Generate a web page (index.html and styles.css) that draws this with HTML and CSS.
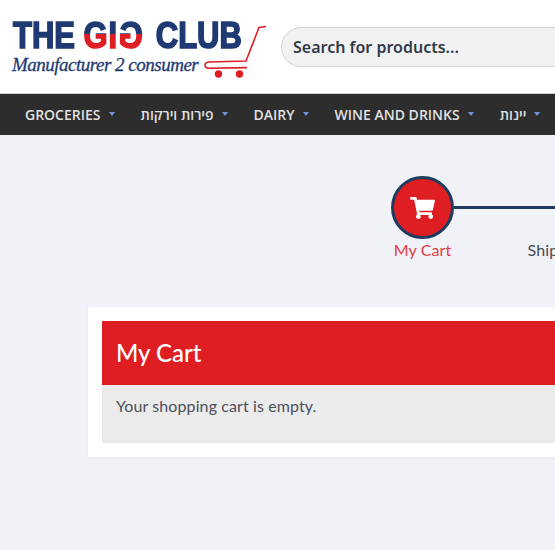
FILE: index.html
```html
<!DOCTYPE html>
<html lang="en">
<head>
    <meta charset="UTF-8">
    <meta name="viewport" content="width=device-width, initial-scale=1.0">
    <title>My Cart</title>
    <link rel="stylesheet" href="styles.css">
</head>
<body>

<header class="site-header">
    <a class="logo" href="#">
        <div class="logo-title">
            <span>THE</span>
            <span class="logo-gig">GI<span class="logo-flip">G</span></span>
            <span class="logo-club">CLUB</span>
        </div>
        <div class="logo-tagline">Manufacturer 2 consumer</div>
        <svg class="logo-cart" width="70" height="85" viewBox="0 0 70 85">
            <path d="M62 26.5 L55 27.5 L42 61 L5 62 Q1 62.5 1 65.2 Q1 68 5 68.2 L43 67.6" fill="none" stroke="#df1e24" stroke-width="1.6"/>
            <circle cx="14.5" cy="74" r="3.7" fill="#df1e24"/>
            <circle cx="35.5" cy="74" r="3.7" fill="#df1e24"/>
        </svg>
    </a>
    <input class="search-input" type="text" placeholder="Search for products...">
</header>

<nav class="main-nav">
    <a class="nav-item" href="#">Groceries<span class="nav-caret"></span></a>
    <a class="nav-item" href="#">פירות וירקות<span class="nav-caret"></span></a>
    <a class="nav-item" href="#">Dairy<span class="nav-caret"></span></a>
    <a class="nav-item" href="#">Wine and Drinks<span class="nav-caret"></span></a>
    <a class="nav-item" href="#">יינות<span class="nav-caret"></span></a>
</nav>

<main class="page-content">
    <div class="steps">
        <div class="step step-active">
            <div class="step-circle">
                <svg width="25" height="22" viewBox="0 0 576 512"><path fill="#ffffff" d="M528.12 301.319l47.273-208C578.806 78.301 567.391 64 551.99 64H159.208l-9.166-44.81C147.758 8.021 137.93 0 126.529 0H24C10.745 0 0 10.745 0 24v16c0 13.255 10.745 24 24 24h69.883l70.248 343.435C147.325 417.1 136 435.222 136 456c0 30.928 25.072 56 56 56s56-25.072 56-56c0-15.674-6.447-29.835-16.824-40h209.647C430.447 426.165 424 440.326 424 456c0 30.928 25.072 56 56 56s56-25.072 56-56c0-22.172-12.888-41.332-31.579-50.405l5.517-24.276c3.413-15.018-8.002-29.319-23.403-29.319H218.117l-6.545-32h293.145c11.206 0 20.92-7.754 23.403-18.681z"/></svg>
            </div>
            <div class="step-label">My Cart</div>
        </div>
        <div class="step-line"></div>
        <div class="step">
            <div class="step-circle"></div>
            <div class="step-label">Shipping Address</div>
        </div>
    </div>

    <section class="cart-card">
        <h1 class="cart-title">My Cart</h1>
        <div class="cart-body">Your shopping cart is empty.</div>
    </section>
</main>

</body>
</html>
```

FILE: styles.css
```css
html, body {
    overflow: hidden;
}
body {
    margin: 0;
    height: 550px;
    background-color: #f0f2f7;
    font-family: Lato, sans-serif;
}

/* header */
.site-header {
    display: flex;
    align-items: center;
    width: 1000px;
    height: 93px;
    background-color: #ffffff;
    border-bottom: 1px solid #d0d0d0;
}
.logo {
    position: relative;
    display: block;
    width: 268px;
    height: 93px;
    margin-left: 13px;
    flex-shrink: 0;
    text-decoration: none;
}
.logo-title {
    display: flex;
    gap: 10px;
    width: 300px;
    margin-top: 17px;
    font-family: "Liberation Sans", Arial, sans-serif;
    font-size: 36px;
    line-height: 38px;
    font-weight: bold;
    color: #1f3a73;
    -webkit-text-stroke: 1.6px #1f3a73;
    transform: scaleX(0.86);
    transform-origin: left;
}
.logo-club {
    margin-left: 5px;
}
.logo-gig {
    letter-spacing: 1px;
    background: linear-gradient(#1f3a73 0 44%, #df1e24 44% 100%);
    -webkit-background-clip: text;
    background-clip: text;
    color: transparent;
    -webkit-text-stroke: 1.6px transparent;
}
.logo-flip {
    display: inline-block;
    transform: scaleX(-1);
    background: linear-gradient(#1f3a73 0 44%, #df1e24 44% 100%);
    -webkit-background-clip: text;
    background-clip: text;
}
.logo-tagline {
    margin-top: -1px;
    margin-left: -1px;
    font-family: "Liberation Serif", serif;
    font-style: italic;
    font-size: 19px;
    line-height: 22px;
    letter-spacing: -0.5px;
    color: #1f3a73;
    -webkit-text-stroke: 0.3px #1f3a73;
}
.logo-cart {
    position: absolute;
    left: 191px;
    top: 0;
}
.search-input {
    width: 500px;
    height: 40px;
    padding: 0 11px;
    box-sizing: border-box;
    flex-shrink: 0;
    background-color: #f2f2f2;
    border: 1px solid #d4d4d4;
    border-radius: 20px;
    font-family: "Noto Sans", sans-serif;
    font-size: 16px;
    font-weight: 600;
}
.search-input::placeholder {
    color: #333a48;
    opacity: 1;
}

/* nav bar */
.main-nav {
    display: flex;
    align-items: center;
    gap: 26px;
    width: 1000px;
    height: 41px;
    padding-left: 25px;
    background-color: #2d2d2d;
}
.nav-item {
    display: flex;
    align-items: center;
    gap: 8px;
    font-family: "Open Sans", sans-serif;
    font-size: 14px;
    font-weight: 600;
    text-transform: uppercase;
    white-space: nowrap;
    text-decoration: none;
    color: #e0e0e0;
}
.nav-caret {
    width: 0;
    height: 0;
    margin-top: -2px;
    border-left: 3.5px solid transparent;
    border-right: 3.5px solid transparent;
    border-top: 4px solid #6f93dc;
}

/* checkout steps */
.steps {
    display: flex;
    align-items: flex-start;
    width: 800px;
    padding-top: 41px;
    padding-left: 391px;
}
.step {
    display: flex;
    flex-direction: column;
    align-items: center;
    width: 63px;
}
.step-circle {
    display: flex;
    align-items: center;
    justify-content: center;
    width: 63px;
    height: 63px;
    box-sizing: border-box;
    background-color: #df1e24;
    border: 3px solid #1d3c5f;
    border-radius: 50%;
}
.step-label {
    font-size: 16px;
    line-height: 22px;
    letter-spacing: 0.1px;
    white-space: nowrap;
    color: #444b57;
}
.step-active .step-label {
    color: #e43a41;
}
.step-line {
    width: 103px;
    height: 3px;
    margin-top: 30px;
    background-color: #1d3c5f;
}

/* cart card */
.cart-card {
    width: 800px;
    margin-top: 46px;
    margin-left: 88px;
    padding: 14px;
    background-color: #ffffff;
    box-shadow: 0 1px 3px rgba(0, 0, 0, 0.05);
}
.cart-title {
    margin: 0;
    height: 64px;
    padding-left: 14px;
    background-color: #df1e24;
    font-size: 24px;
    font-weight: 500;
    line-height: 64px;
    color: #ffffff;
}
.cart-body {
    height: 58px;
    padding: 11px 14px 0;
    box-sizing: border-box;
    background-color: #ebebeb;
    font-size: 16px;
    line-height: 20px;
    letter-spacing: 0.1px;
    color: #4a4f59;
}
```
